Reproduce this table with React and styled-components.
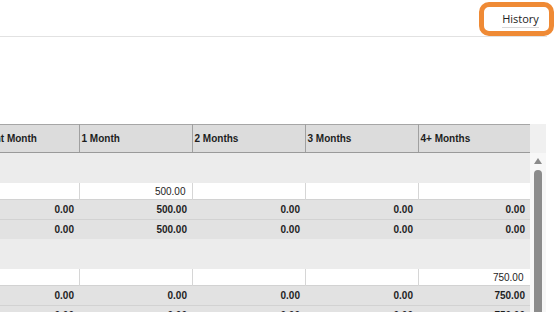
import styled, { createGlobalStyle } from "styled-components";

const GlobalStyle = createGlobalStyle`
  html, body {
    margin: 0;
    padding: 0;
    background: #ffffff;
    font-family: "Liberation Sans", Arial, sans-serif;
    overflow: hidden;
  }
`;

const columns = ["Current Month", "1 Month", "2 Months", "3 Months", "4+ Months"];

const groups = [
  {
    entry: ["", "500.00", "", "", ""],
    totals: [
      ["0.00", "500.00", "0.00", "0.00", "0.00"],
      ["0.00", "500.00", "0.00", "0.00", "0.00"],
    ],
  },
  {
    entry: ["", "", "", "", "750.00"],
    totals: [
      ["0.00", "0.00", "0.00", "0.00", "750.00"],
      ["0.00", "0.00", "0.00", "0.00", "750.00"],
    ],
  },
];

const App = () => {
  return (
    <Page>
      <GlobalStyle />
      <TopBar>
        <Highlight>
          <HistoryButton>History</HistoryButton>
        </Highlight>
      </TopBar>

      <TableArea>
        <TableClip>
          <Grid>
            <colgroup>
              <col style={{ width: 113 }} />
              <col style={{ width: 113 }} />
              <col style={{ width: 113 }} />
              <col style={{ width: 113 }} />
              <col style={{ width: 112 }} />
            </colgroup>
            <thead>
              <tr>
                {columns.map((c) => (
                  <HeadCell key={c}>{c}</HeadCell>
                ))}
              </tr>
            </thead>
            <tbody>
              {groups.map((g, gi) => (
                <GroupBlock key={gi} group={g} />
              ))}
            </tbody>
          </Grid>
        </TableClip>
        <ScrollColumn>
          <HeadFiller />
          <Track>
            <Arrow />
            <Thumb />
          </Track>
        </ScrollColumn>
      </TableArea>
    </Page>
  );
};

const GroupBlock = ({ group }) => (
  <>
    <GroupRow>
      <td colSpan={5} />
    </GroupRow>
    <tr>
      {group.entry.map((v, i) => (
        <EntryCell key={i}>{v}</EntryCell>
      ))}
    </tr>
    {group.totals.map((row, ri) => (
      <tr key={ri}>
        {row.map((v, i) => (
          <TotalCell key={i}>{v}</TotalCell>
        ))}
      </tr>
    ))}
  </>
);

const Page = styled.div`
  width: 557px;
  height: 312px;
  overflow: hidden;
`;

const TopBar = styled.div`
  height: 36px;
  margin-right: 10px;
  border-bottom: 1px solid #e2e2e2;
  display: flex;
  justify-content: flex-end;
  align-items: flex-start;
`;

const Highlight = styled.div`
  margin-top: 2px;
  margin-right: -7px;
  width: 75px;
  height: 34px;
  box-sizing: border-box;
  border: 5px solid #ef8a35;
  border-radius: 10px;
  display: flex;
  align-items: center;
  justify-content: center;
  background: #ffffff;
`;

const HistoryButton = styled.span`
  font-family: "Open Sans", "Liberation Sans", sans-serif;
  font-size: 11px;
  color: #222222;
  margin-left: 8px;
  margin-top: 1px;
  padding-bottom: 1px;
  border-bottom: 1px solid #d8d8d8;
  line-height: 14px;
`;

const TableArea = styled.div`
  margin-top: 87px;
  display: flex;
  align-items: stretch;
  height: 188px;
`;

const TableClip = styled.div`
  width: 530px;
  overflow: hidden;
`;

const Grid = styled.table`
  margin-left: -34px;
  width: 564px;
  table-layout: fixed;
  border-collapse: collapse;
  font-family: "Liberation Sans", Arial, sans-serif;
  font-size: 10px;
  color: #1e1e1e;
`;

const HeadCell = styled.th`
  height: 27px;
  padding: 0 2px;
  text-align: left;
  font-weight: bold;
  white-space: nowrap;
  overflow: hidden;
  background: #dcdcdc;
  border-top: 1px solid #a6a6a6;
  border-bottom: 1px solid #9a9a9a;
  border-right: 1px solid #a0a0a0;
`;

const GroupRow = styled.tr`
  td {
    height: 30px;
    padding: 0;
    background: #ececec;
  }
`;

const EntryCell = styled.td`
  height: 16px;
  padding: 0 6px 0 4px;
  text-align: right;
  background: #ffffff;
  border-right: 1px solid #d6d6d6;
  white-space: nowrap;
`;

const TotalCell = styled.td`
  height: 19px;
  padding: 0 5px 0 4px;
  text-align: right;
  font-weight: bold;
  background: #e2e2e2;
  border-top: 1px solid #d2d2d2;
  white-space: nowrap;
`;

const ScrollColumn = styled.div`
  width: 16px;
  display: flex;
  flex-direction: column;
`;

const HeadFiller = styled.div`
  height: 29px;
  background: #f0f0f0;
`;

const Track = styled.div`
  flex: 1;
  background: #f7f7f7;
  display: flex;
  flex-direction: column;
  align-items: center;
  padding-top: 5px;
  gap: 6px;
`;

const Arrow = styled.div`
  width: 0;
  height: 0;
  border-left: 4px solid transparent;
  border-right: 4px solid transparent;
  border-bottom: 6px solid #8a8a8a;
`;

const Thumb = styled.div`
  width: 8px;
  flex: 1;
  background: #8c8c8c;
  border-radius: 4px 4px 0 0;
`;

export default App;
